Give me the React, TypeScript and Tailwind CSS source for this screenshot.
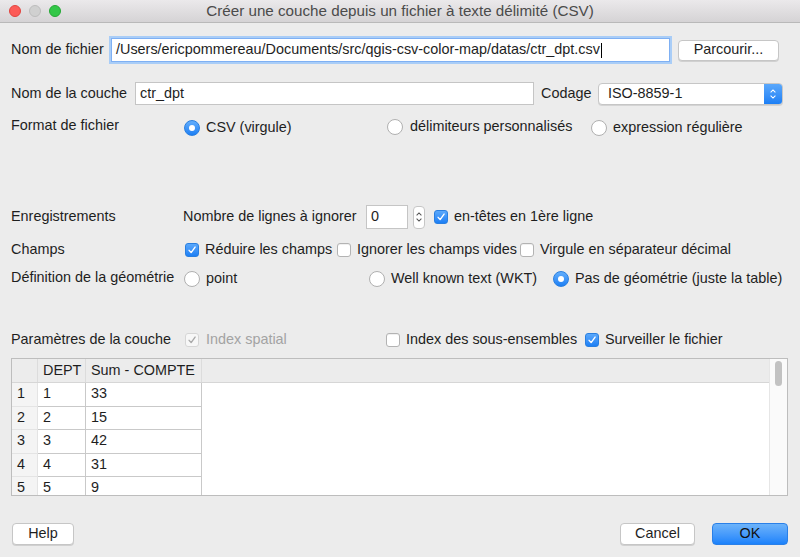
import React from "react";

const Check = ({ color = "#fff" }: { color?: string }) => (
  <svg viewBox="0 0 14 14" className="w-[14px] h-[14px]">
    <path d="M3.6 7.4 L6 10 L10.6 3.6" fill="none" stroke={color} strokeWidth="1.6" strokeLinecap="round" strokeLinejoin="round" />
  </svg>
);

function Checkbox({ checked, disabled }: { checked?: boolean; disabled?: boolean }) {
  if (disabled) {
    return (
      <div className="w-[14px] h-[14px] rounded-[3px] border border-[#d6d6d6] bg-[#f7f7f7] flex items-center justify-center shrink-0">
        <Check color="#a9a9a9" />
      </div>
    );
  }
  if (checked) {
    return (
      <div className="w-[14px] h-[14px] rounded-[3px] bg-gradient-to-b from-[#5aa8fb] to-[#1b7ff5] border border-[#2a7fe0] flex items-center justify-center shrink-0">
        <Check />
      </div>
    );
  }
  return <div className="w-[14px] h-[14px] rounded-[3px] border border-[#b3b3b3] bg-white shadow-[inset_0_1px_0_#f0f0f0] shrink-0" />;
}

function Radio({ checked }: { checked?: boolean }) {
  if (checked) {
    return (
      <div className="w-[16px] h-[16px] rounded-full bg-gradient-to-b from-[#62aefc] to-[#1a7ff4] border border-[#2a7fe0] flex items-center justify-center shrink-0">
        <div className="w-[6px] h-[6px] rounded-full bg-white" />
      </div>
    );
  }
  return <div className="w-[16px] h-[16px] rounded-full border border-[#b0b0b0] bg-white shrink-0" />;
}

function Stepper({ blue }: { blue?: boolean }) {
  const c = blue ? "#fff" : "#555";
  return (
    <svg viewBox="0 0 10 16" className="w-[8px] h-[14px]">
      <path d="M2 6 L5 3 L8 6" fill="none" stroke={c} strokeWidth="1.3" />
      <path d="M2 10 L5 13 L8 10" fill="none" stroke={c} strokeWidth="1.3" />
    </svg>
  );
}

const rows = [
  ["1", "1", "33"],
  ["2", "2", "15"],
  ["3", "3", "42"],
  ["4", "4", "31"],
  ["5", "5", "9"],
];

export default function App() {
  return (
    <div className="w-[800px] h-[557px] bg-[#ececec] flex flex-col font-['Liberation_Sans',Arial,sans-serif] text-[14.4px] text-[#1e1e1e] overflow-hidden whitespace-nowrap">
      {/* Title bar */}
      <div className="h-[23px] shrink-0 flex items-center bg-gradient-to-b from-[#ebe9eb] to-[#d5d3d5] border-b border-[#b9b9b9]">
        <div className="flex items-center gap-[8px] pl-[9px] w-[80px]">
          <div className="w-[12px] h-[12px] rounded-full bg-[#fc5b57] border border-[#e1443f]" />
          <div className="w-[12px] h-[12px] rounded-full bg-[#d0d0d0] border border-[#bdbdbd]" />
          <div className="w-[12px] h-[12px] rounded-full bg-[#33c748] border border-[#25a835]" />
        </div>
        <div className="flex-1 text-center text-[#4b4b4b] text-[15.2px] pr-[80px]">Créer une couche depuis un fichier à texte délimité (CSV)</div>
      </div>

      <div className="flex flex-col px-[11px]">
        {/* Nom de fichier */}
        <div className="flex items-center h-[24px] mt-[15px]">
          <div className="w-[100px]">Nom de fichier</div>
          <div className="w-[559px] h-[24px] bg-white border border-[#7fb0f3] shadow-[0_0_0_2px_#a9cdf7] flex items-center pl-[4px]">
            /Users/ericpommereau/Documents/src/qgis-csv-color-map/datas/ctr_dpt.csv<span className="w-[1px] h-[15px] bg-black ml-[1px]" />
          </div>
          <div className="ml-[8px] w-[101px] h-[21px] bg-white border border-[#c6c6c6] rounded-[4px] shadow-[0_1px_0_#d0d0d0] flex items-center justify-center">Parcourir...</div>
        </div>

        {/* Nom de la couche */}
        <div className="flex items-center h-[23px] mt-[20px]">
          <div className="w-[124px]">Nom de la couche</div>
          <div className="w-[399px] h-[23px] bg-white border border-[#c5c5c5] flex items-center pl-[4px]">ctr_dpt</div>
          <div className="ml-[7px] w-[57px]">Codage</div>
          <div className="w-[185px] h-[22px] bg-white border border-[#c6c6c6] rounded-[4px] flex items-center shadow-[0_1px_0_#d4d4d4] overflow-hidden">
            <div className="flex-1 pl-[9px]">ISO-8859-1</div>
            <div className="w-[18px] h-full bg-gradient-to-b from-[#5aa8fb] to-[#1b7ff5] flex items-center justify-center">
              <Stepper blue />
            </div>
          </div>
        </div>

        {/* Format de fichier */}
        <div className="flex items-center h-[20px] mt-[13px]">
          <div className="w-[173px] -mt-[4px]">Format de fichier</div>
          <div className="w-[203px] flex items-center gap-[6px]"><Radio checked />CSV (virgule)</div>
          <div className="w-[204px] flex items-center gap-[7px] -mt-[2px]"><Radio />délimiteurs personnalisés</div>
          <div className="flex items-center gap-[6px]"><Radio />expression régulière</div>
        </div>

        {/* Enregistrements */}
        <div className="flex items-center h-[24px] mt-[67px]">
          <div className="w-[172px]">Enregistrements</div>
          <div className="w-[183px]">Nombre de lignes à ignorer</div>
          <div className="w-[42px] h-[24px] bg-white border border-[#c5c5c5] flex items-center pl-[4px]">0</div>
          <div className="ml-[5px] w-[12px] h-[23px] bg-white border border-[#c6c6c6] rounded-[4px] flex items-center justify-center">
            <Stepper />
          </div>
          <div className="ml-[9px] flex items-center gap-[6px]"><Checkbox checked />en-têtes en 1ère ligne</div>
        </div>

        {/* Champs */}
        <div className="flex items-center h-[20px] mt-[11px]">
          <div className="w-[174px]">Champs</div>
          <div className="w-[152px] flex items-center gap-[6px]"><Checkbox checked />Réduire les champs</div>
          <div className="w-[183px] flex items-center gap-[6px]"><Checkbox />Ignorer les champs vides</div>
          <div className="flex items-center gap-[6px]"><Checkbox />Virgule en séparateur décimal</div>
        </div>

        {/* Géométrie */}
        <div className="flex items-center h-[20px] mt-[9px]">
          <div className="w-[173px] -mt-[2px]">Définition de la géométrie</div>
          <div className="w-[185px] flex items-center gap-[6px]"><Radio />point</div>
          <div className="w-[184px] flex items-center gap-[6px]"><Radio />Well known text (WKT)</div>
          <div className="flex items-center gap-[6px]"><Radio checked />Pas de géométrie (juste la table)</div>
        </div>

        {/* Paramètres */}
        <div className="flex items-center h-[20px] mt-[41px]">
          <div className="w-[174px]">Paramètres de la couche</div>
          <div className="w-[201px] flex items-center gap-[7px] text-[#a3a3a3]"><Checkbox disabled />Index spatial</div>
          <div className="w-[199px] flex items-center gap-[6px]"><Checkbox />Index des sous-ensembles</div>
          <div className="flex items-center gap-[6px]"><Checkbox checked />Surveiller le fichier</div>
        </div>

        {/* Table */}
        <div className="mt-[8px] w-[777px] h-[138px] border border-[#bdbdbd] bg-white flex overflow-hidden">
          <div className="flex-1 flex flex-col">
            <div className="h-[24px] shrink-0 bg-[#ececec] border-b border-[#d6d6d6] flex items-center">
              <div className="w-[26px] h-full border-r border-[#dcdcdc]" />
              <div className="w-[48px] h-full flex items-center pl-[5px] border-r border-[#dcdcdc]">DEPT</div>
              <div className="w-[116px] h-full flex items-center pl-[5px] border-r border-[#dcdcdc]">Sum - COMPTE</div>
            </div>
            {rows.map((r) => (
              <div key={r[0]} className="h-[23.5px] shrink-0 flex">
                <div className="w-[26px] h-full bg-[#f4f4f4] border-b border-[#c9c9c9] flex items-center pl-[5px] border-r border-[#e4e4e4]">{r[0]}</div>
                <div className="w-[48px] h-full border-b border-r border-[#c9c9c9] flex items-center pl-[5px]">{r[1]}</div>
                <div className="w-[116px] h-full border-b border-r border-[#c9c9c9] flex items-center pl-[5px]">{r[2]}</div>
              </div>
            ))}
          </div>
          <div className="w-[18px] h-full bg-[#fafafa] border-l border-[#e6e6e6] flex justify-center pt-[2px]">
            <div className="w-[7px] h-[25px] rounded-full bg-[#c2c2c2]" />
          </div>
        </div>

        {/* Buttons */}
        <div className="flex items-center mt-[27px]">
          <div className="ml-[1px] w-[62px] h-[22px] bg-white border border-[#c6c6c6] rounded-[4px] shadow-[0_1px_0_#d0d0d0] flex items-center justify-center">Help</div>
          <div className="flex-1" />
          <div className="w-[75px] h-[22px] bg-white border border-[#c6c6c6] rounded-[4px] shadow-[0_1px_0_#d0d0d0] flex items-center justify-center">Cancel</div>
          <div className="ml-[17px] mr-[1px] w-[76px] h-[22px] bg-gradient-to-b from-[#6cb3fa] to-[#1a82fb] border border-[#2a80e8] rounded-[4px] text-[#111] flex items-center justify-center">OK</div>
        </div>
      </div>
    </div>
  );
}
